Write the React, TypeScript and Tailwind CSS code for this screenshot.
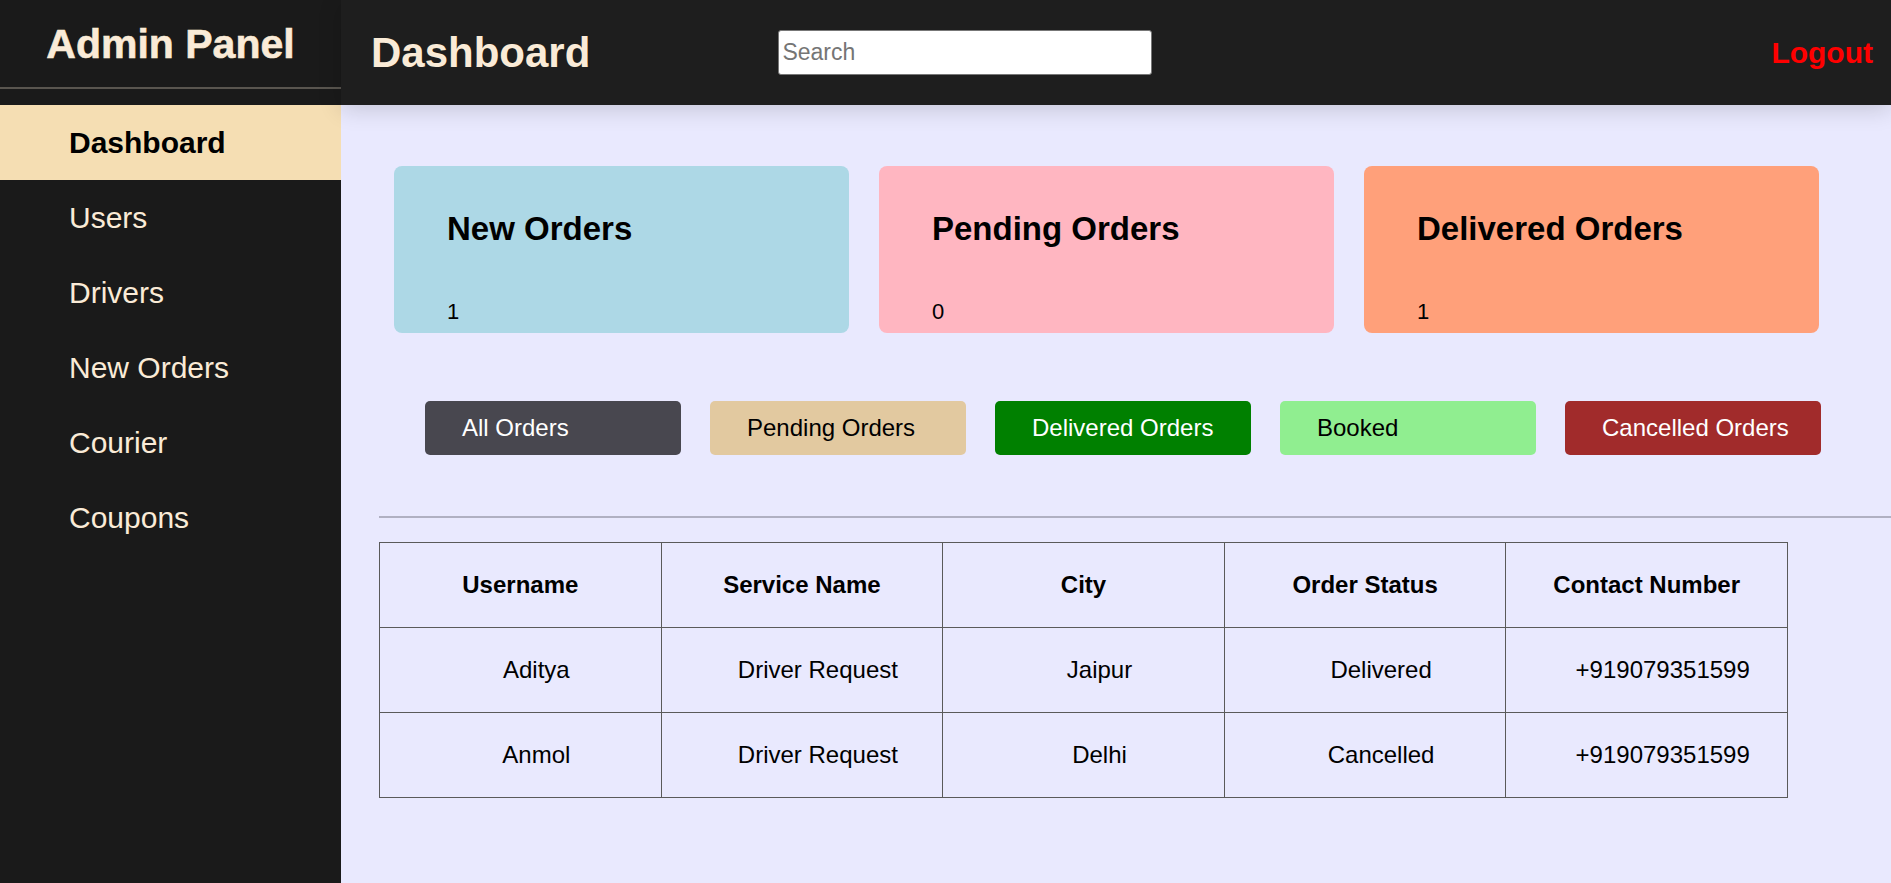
import React from 'react';

const navItems = ['Dashboard', 'Users', 'Drivers', 'New Orders', 'Courier', 'Coupons'];

const cards = [
  { title: 'New Orders', count: 1, bg: 'bg-[#add8e6]' },
  { title: 'Pending Orders', count: 0, bg: 'bg-[#ffb6c1]' },
  { title: 'Delivered Orders', count: 1, bg: 'bg-[#ffa07a]' },
];

const filters = [
  { label: 'All Orders', cls: 'bg-[#48474f] text-white' },
  { label: 'Pending Orders', cls: 'bg-[#e2c9a0] text-black' },
  { label: 'Delivered Orders', cls: 'bg-[#008000] text-white' },
  { label: 'Booked', cls: 'bg-[#90ee90] text-black' },
  { label: 'Cancelled Orders', cls: 'bg-[#a12b2b] text-white' },
];

const orders = [
  { user: 'Aditya', service: 'Driver Request', city: 'Jaipur', status: 'Delivered', phone: '+919079351599' },
  { user: 'Anmol', service: 'Driver Request', city: 'Delhi', status: 'Cancelled', phone: '+919079351599' },
];

export default function App() {
  return (
    <div className="flex min-h-[883px] w-full font-['Liberation_Sans',Arial,sans-serif]">
      {/* Sidebar */}
      <aside className="w-[341px] shrink-0 bg-[#1a1a1a]">
        <div className="flex h-[89px] items-center justify-center border-b-2 border-[#59554f] pt-[2px]">
          <h1 className="text-[41px] font-bold leading-none text-[#faebd7] [-webkit-text-stroke:0.6px_#faebd7]">
            Admin Panel
          </h1>
        </div>
        <nav className="mt-[16px]">
          {navItems.map((item, i) => (
            <div
              key={item}
              className={
                i === 0
                  ? 'flex h-[75px] items-center bg-[#f5deb3] pl-[69px] text-[30px] font-bold text-black'
                  : 'flex h-[75px] items-center pl-[69px] text-[30px] text-[#faebd7]'
              }
            >
              {item}
            </div>
          ))}
        </nav>
      </aside>

      {/* Main */}
      <div className="flex flex-1 flex-col bg-[#e9e9fe]">
        <header className="relative z-10 flex h-[105px] items-center bg-[#1e1e1e] shadow-[0_4px_22px_rgba(0,0,0,0.16)]">
          <h2 className="ml-[30px] text-[42px] font-bold text-[#faebd7]">Dashboard</h2>
          <input
            type="text"
            placeholder="Search"
            className="ml-[188px] h-[45px] w-[374px] rounded-[3px] border border-[#777] bg-white px-[3px] text-[23px] text-black placeholder-[#757575] outline-none"
          />
          <button className="ml-auto mr-[18px] text-[30px] font-bold text-[#ff0000]">Logout</button>
        </header>

        <main className="pt-[61px]">
          {/* Stat cards */}
          <div className="ml-[53px] flex gap-[30px]">
            {cards.map((c) => (
              <div key={c.title} className={`${c.bg} h-[167px] w-[455px] rounded-[8px] pl-[53px] pt-[44px]`}>
                <div className="text-[33px] font-bold leading-[38px] text-black">{c.title}</div>
                <div className="mt-[51px] text-[22px] leading-[25px] text-black">{c.count}</div>
              </div>
            ))}
          </div>

          {/* Filter buttons */}
          <div className="ml-[84px] mt-[68px] flex gap-[29px]">
            {filters.map((f) => (
              <button
                key={f.label}
                className={`${f.cls} h-[54px] w-[256px] rounded-[5px] pl-[37px] text-left text-[24px]`}
              >
                {f.label}
              </button>
            ))}
          </div>

          <div className="ml-[38px] mt-[61px] h-[2px] bg-[#b0b0c2]" />

          {/* Orders table */}
          <table className="ml-[38px] mt-[24px] w-[1409px] table-fixed border-collapse text-[24px] text-black">
            <thead>
              <tr className="h-[85px]">
                {['Username', 'Service Name', 'City', 'Order Status', 'Contact Number'].map((h) => (
                  <th key={h} className="border border-[#5a5a5a] text-center font-bold">
                    {h}
                  </th>
                ))}
              </tr>
            </thead>
            <tbody>
              {orders.map((o) => (
                <tr key={o.user} className="h-[85px]">
                  {[o.user, o.service, o.city, o.status, o.phone].map((v, i) => (
                    <td key={i} className="border border-[#5a5a5a] pl-[32px] text-center">
                      {v}
                    </td>
                  ))}
                </tr>
              ))}
            </tbody>
          </table>
        </main>
      </div>
    </div>
  );
}
